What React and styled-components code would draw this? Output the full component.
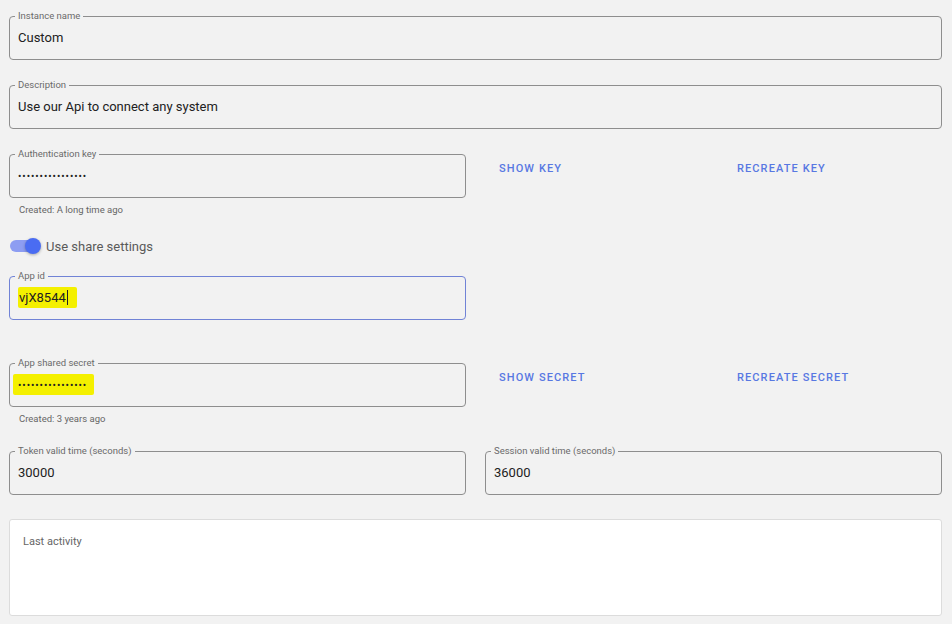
import styled, { createGlobalStyle } from 'styled-components';

const GlobalStyle = createGlobalStyle`
  html, body {
    margin: 0;
    padding: 0;
    background: #f2f2f2;
    font-family: Roboto, "Liberation Sans", Arial, sans-serif;
  }
`;

const Page = styled.div`
  display: flex;
  flex-direction: column;
  padding: 10px 10px 0 9px;
  width: 952px;
  box-sizing: border-box;
`;

const Field = styled.fieldset`
  margin: ${p => p.$mt || 0}px 0 0 0;
  padding: 0 8px 6px 8px;
  min-width: 0;
  border: 1px solid ${p => (p.$focused ? '#7183d6' : '#8e8e8e')};
  border-radius: 4px;
  box-sizing: border-box;

  legend {
    font-size: 9.5px;
    line-height: 12px;
    color: #6a6a6a;
    padding: 0 3px;
    margin-left: -3px;
  }
`;

const Value = styled.div`
  height: 31px;
  line-height: 31px;
  font-size: 13px;
  color: #212121;
  white-space: nowrap;
`;

const Dots = styled.span`
  font-size: 10px;
  letter-spacing: 0.95px;
  color: #222;
`;

const Marker = styled.span`
  background: #f4f000;
  padding: ${p => p.$pad || '3px 8px 3px 1px'};
  margin-left: ${p => p.$ml || 0}px;
  border-radius: 2px;
`;

const Caret = styled.span`
  display: inline-block;
  width: 1px;
  height: 15px;
  background: #222;
  vertical-align: -3px;
  margin-left: 1px;
`;

const Row = styled.div`
  display: grid;
  grid-template-columns: 457px 457px;
  column-gap: 19px;
  margin-top: ${p => p.$mt || 0}px;
`;

const Actions = styled.div`
  display: flex;
  padding: 14px 0 0 14px;
`;

const TextButton = styled.button`
  background: none;
  border: none;
  padding: 0;
  width: ${p => p.$w || 'auto'};
  text-align: left;
  font-family: Roboto, "Liberation Sans", Arial, sans-serif;
  font-size: 11px;
  font-weight: 500;
  letter-spacing: 1.1px;
  line-height: 13px;
  color: #5878e2;
  height: 13px;
  cursor: pointer;
`;

const Helper = styled.div`
  font-size: 9.5px;
  line-height: 12px;
  color: #666;
  margin: 6px 0 0 10px;
`;

const SwitchRow = styled.label`
  display: flex;
  align-items: center;
  height: 20px;
  margin-top: 20px;
  gap: 8px;
  font-size: 13px;
  color: #5a5a5a;
`;

const Switch = styled.span`
  position: relative;
  display: inline-block;
  width: 28px;
  height: 12px;
  margin-left: 1px;
  border-radius: 6px;
  background: #8d9df2;

  &::after {
    content: '';
    position: absolute;
    right: -3px;
    top: -2px;
    width: 16px;
    height: 16px;
    border-radius: 50%;
    background: #4a6cf2;
    box-shadow: 0 1px 3px rgba(0, 0, 0, 0.3);
  }
`;

const Card = styled.div`
  margin-top: 24px;
  height: 97px;
  box-sizing: border-box;
  background: #fff;
  border: 1px solid #dcdcdc;
  border-radius: 3px;
  padding: 15px 13px;
  font-size: 11px;
  color: #666;
`;

function OutlinedField({ label, children, mt, focused }) {
  return (
    <Field $mt={mt} $focused={focused}>
      <legend>{label}</legend>
      <Value>{children}</Value>
    </Field>
  );
}

const dots = '••••••••••••••••';

export default function App() {
  return (
    <>
      <GlobalStyle />
      <Page>
        <OutlinedField label="Instance name">Custom</OutlinedField>
        <OutlinedField label="Description" mt={19}>Use our Api to connect any system</OutlinedField>

        <Row $mt={19}>
          <div>
            <OutlinedField label="Authentication key"><Dots>{dots}</Dots></OutlinedField>
            <Helper>Created: A long time ago</Helper>
          </div>
          <Actions>
            <TextButton $w="238px">SHOW KEY</TextButton>
            <TextButton>RECREATE KEY</TextButton>
          </Actions>
        </Row>

        <SwitchRow>
          <Switch />
          Use share settings
        </SwitchRow>

        <Row $mt={14}>
          <OutlinedField label="App id" focused>
            <Marker $pad="3px 9px 3px 1px" $ml={0}>vjX8544<Caret /></Marker>
          </OutlinedField>
        </Row>

        <Row $mt={37}>
          <div>
            <OutlinedField label="App shared secret">
              <Marker $pad="3px 7px 3px 5px" $ml={-5}><Dots>{dots}</Dots></Marker>
            </OutlinedField>
            <Helper>Created: 3 years ago</Helper>
          </div>
          <Actions>
            <TextButton $w="238px">SHOW SECRET</TextButton>
            <TextButton>RECREATE SECRET</TextButton>
          </Actions>
        </Row>

        <Row $mt={20}>
          <OutlinedField label="Token valid time (seconds)">30000</OutlinedField>
          <OutlinedField label="Session valid time (seconds)">36000</OutlinedField>
        </Row>

        <Card>Last activity</Card>
      </Page>
    </>
  );
}
